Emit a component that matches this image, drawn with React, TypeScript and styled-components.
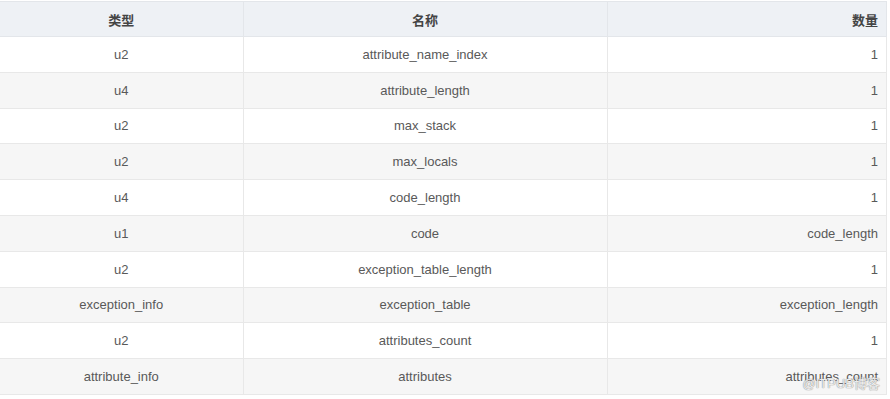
import React from "react";
import styled, { createGlobalStyle } from "styled-components";

const Global = createGlobalStyle`
  html, body { margin: 0; padding: 0; background: #fff; }
  body { font-family: "Liberation Sans", Arial, "Noto Sans CJK SC", sans-serif; }
`;

const Page = styled.div`
  position: relative;
  width: 890px;
  height: 399px;
  overflow: hidden;
  background: #fff;
`;

const Table = styled.table`
  width: 887px;
  border-collapse: collapse;
  table-layout: fixed;
  font-size: 13px;
  color: #595959;
  margin-top: 1px;
`;

const HeadCell = styled.th<{ $align?: string; $w?: number }>`
  height: 35px;
  padding: 0 8px;
  background: #eef1f5;
  border: 1px solid #e3e6ea;
  border-left: none;
  color: #444;
  font-weight: bold;
  font-family: "Noto Sans CJK SC", "Liberation Sans", sans-serif;
  font-size: 13px;
  text-align: ${(p) => p.$align || "center"};
  width: ${(p) => (p.$w ? p.$w + "px" : "auto")};
  box-sizing: border-box;
`;

const Row = styled.tr<{ $striped: boolean }>`
  background: ${(p) => (p.$striped ? "#f6f6f6" : "#fff")};
`;

const Cell = styled.td<{ $align?: string }>`
  height: 35.8px;
  padding: 0 8px;
  border: 1px solid #e8e8e8;
  border-left: none;
  text-align: ${(p) => p.$align || "center"};
  box-sizing: border-box;
  white-space: nowrap;
`;

const Watermark = styled.div`
  position: absolute;
  right: 10px;
  bottom: 7px;
  font-family: "Liberation Sans", "Noto Sans CJK SC", sans-serif;
  font-size: 13px;
  color: rgba(255, 255, 255, 0.85);
  text-shadow: 0 0 1px #888, 0 0 1px #999;
  letter-spacing: 0px;
`;

const rows: [string, string, string][] = [
  ["u2", "attribute_name_index", "1"],
  ["u4", "attribute_length", "1"],
  ["u2", "max_stack", "1"],
  ["u2", "max_locals", "1"],
  ["u4", "code_length", "1"],
  ["u1", "code", "code_length"],
  ["u2", "exception_table_length", "1"],
  ["exception_info", "exception_table", "exception_length"],
  ["u2", "attributes_count", "1"],
  ["attribute_info", "attributes", "attributes_count"],
];

export default function App() {
  return (
    <Page>
      <Global />
      <Table>
        <thead>
          <tr>
            <HeadCell $w={243}>类型</HeadCell>
            <HeadCell $w={364}>名称</HeadCell>
            <HeadCell $align="right">数量</HeadCell>
          </tr>
        </thead>
        <tbody>
          {rows.map((r, i) => (
            <Row key={i} $striped={i % 2 === 1}>
              <Cell>{r[0]}</Cell>
              <Cell>{r[1]}</Cell>
              <Cell $align="right">{r[2]}</Cell>
            </Row>
          ))}
        </tbody>
      </Table>
      <Watermark>@ITPUB博客</Watermark>
    </Page>
  );
}
